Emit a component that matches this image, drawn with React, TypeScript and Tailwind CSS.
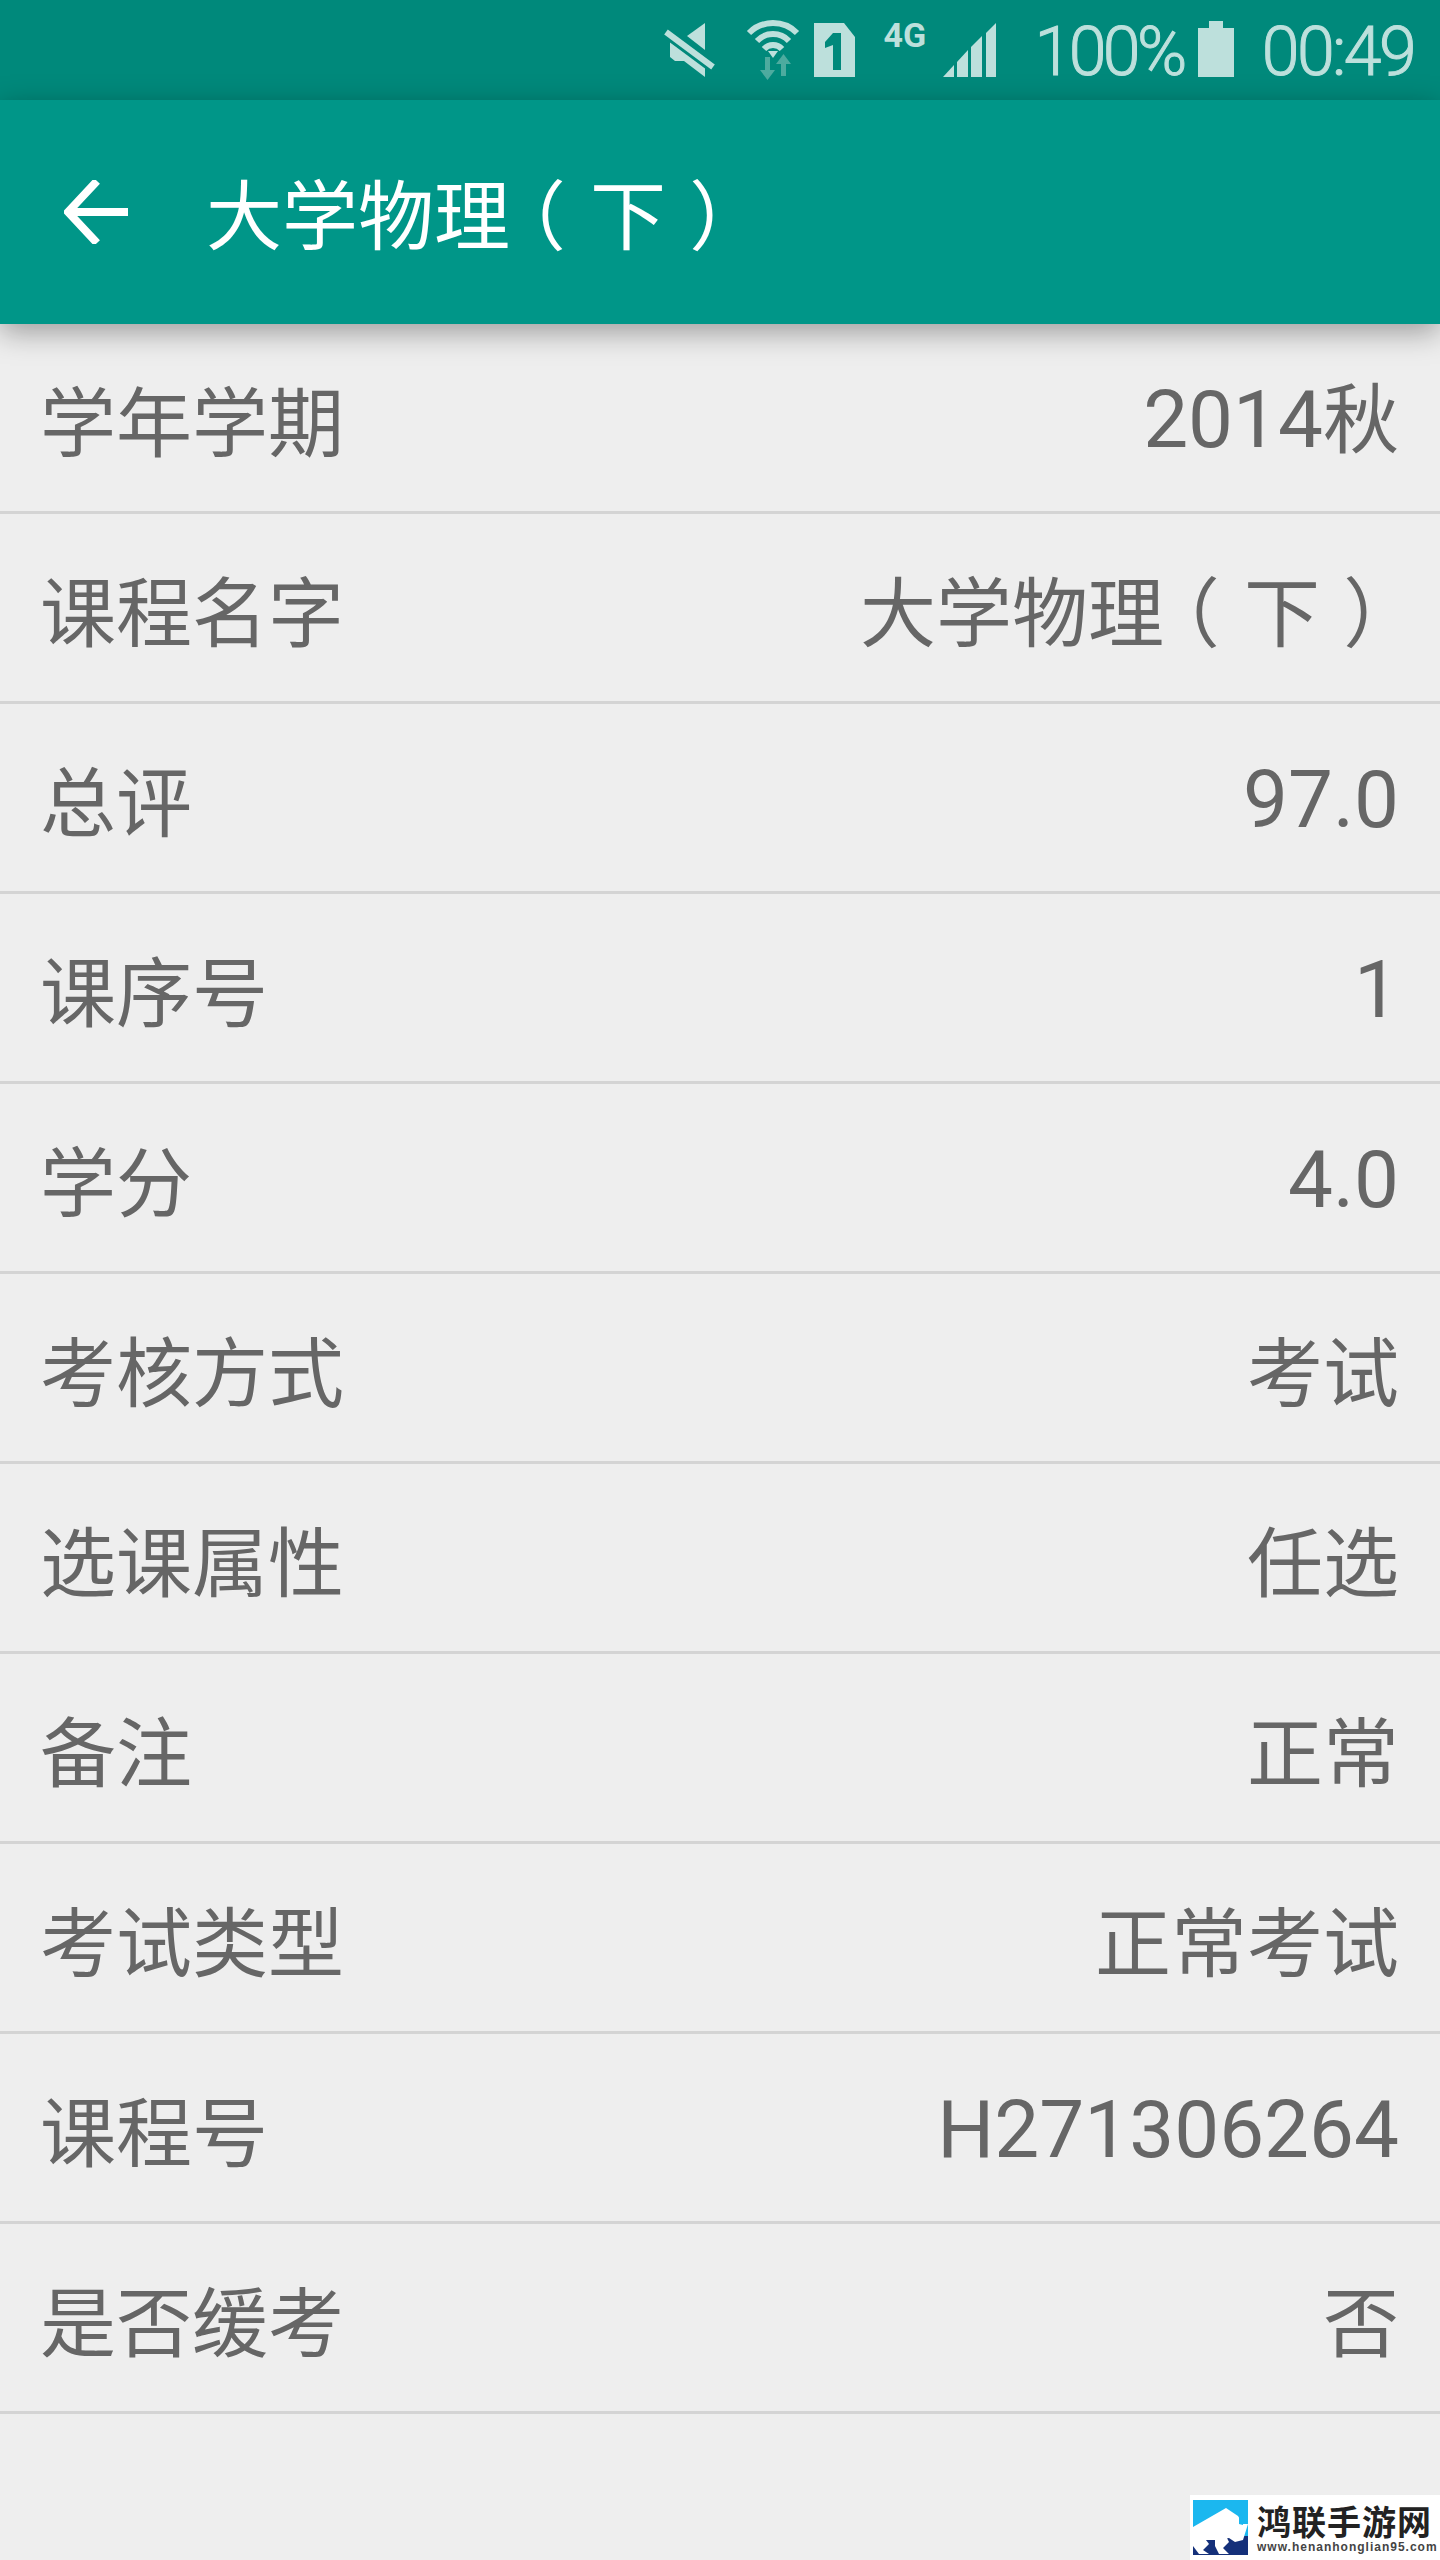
import type { ReactNode } from "react";

const rows: [string, ReactNode][] = [
  ["学年学期", <><L>2014</L>秋</>],
  ["课程名字", <Course />],
  ["总评", <L>97.0</L>],
  ["课序号", <L>1</L>],
  ["学分", <L>4.0</L>],
  ["考核方式", "考试"],
  ["选课属性", "任选"],
  ["备注", "正常"],
  ["考试类型", "正常考试"],
  ["课程号", <L>H271306264</L>],
  ["是否缓考", "否"],
];

function L({ children }: { children: ReactNode }) {
  return <span className="text-[80px] font-['Roboto',sans-serif]">{children}</span>;
}

function Course() {
  return (
    <span className="[font-feature-settings:'palt']">
      <span className="[font-feature-settings:normal]">大学物理</span>
      <span className="ml-[15px]">（</span>
      <span className="ml-[27px] [font-feature-settings:normal]">下</span>
      <span className="ml-[26px] mr-[15px]">）</span>
    </span>
  );
}

const font = "font-['Noto_Sans_CJK_SC',sans-serif]";
const ic = "#bde0dc";

function StatusBar() {
  return (
    <div className="h-[100px] bg-[#00897b] flex items-start justify-end pr-[26px] text-[#bde0dc]">
      <svg width="52" height="54" viewBox="0 0 52 54" className="mt-[23px] shrink-0">
        <polygon points="42,0 24,13 42,27" fill={ic} />
        <polygon points="7,19 42,44 42,54 21,38 12,38 7,34" fill={ic} />
        <line x1="3" y1="9" x2="50" y2="44" stroke="#00897b" strokeWidth="12" />
        <line x1="3" y1="9" x2="50" y2="44" stroke={ic} strokeWidth="6" />
      </svg>
      <svg width="60" height="62" viewBox="0 0 60 62" className="ml-[29px] mt-[18px] shrink-0">
        <g fill="none" stroke={ic} strokeWidth="6">
          <path d="M5 15 A34 34 0 0 1 53 15" />
          <path d="M13 23 A22 22 0 0 1 45 23" />
          <path d="M20 31 A12 12 0 0 1 38 31" />
        </g>
        <polygon points="29,40 24,33 34,33" fill={ic} />
        <polygon points="21,39 26,39 26,52 31,52 23.5,62 16,52 21,52" fill="#4dab9f" />
        <polygon points="37,58 42,58 42,46 47,46 39.5,36 32,46 37,46" fill="#4dab9f" />
      </svg>
      <svg width="41" height="54" viewBox="0 0 41 54" className="ml-[10px] mt-[23px] shrink-0">
        <polygon points="0,0 30,0 41,14 41,54 0,54" fill={ic} />
        <polygon points="19,10 27,10 27,47 19,47 19,22 11,25 11,19" fill="#00897b" />
      </svg>
      <span className="ml-[28px] mt-[17px] text-[34px] leading-[36px] font-bold font-['Roboto',sans-serif] text-[#bde0dc] w-[42px] shrink-0">4G</span>
      <svg width="53" height="54" viewBox="0 0 53 54" className="ml-[18px] mt-[23px] shrink-0">
        <polygon points="0,54 11,42 11,54" fill={ic} />
        <polygon points="14,39 25,27 25,54 14,54" fill={ic} />
        <polygon points="28,24 39,13 39,54 28,54" fill={ic} />
        <polygon points="43,10 53,0 53,54 43,54" fill={ic} />
      </svg>
      <span className="ml-[38px] mt-[13px] text-[68px] leading-[78px] font-light tracking-[-3.5px] [-webkit-text-stroke:1px_#bde0dc] font-['Roboto',sans-serif] shrink-0">100%</span>
      <svg width="36" height="56" viewBox="0 0 36 56" className="ml-[14px] mt-[21px] shrink-0">
        <rect x="11" y="0" width="14" height="8" fill={ic} />
        <rect x="0" y="7" width="36" height="49" fill={ic} />
      </svg>
      <span className="ml-[28px] mt-[13px] text-[68px] leading-[78px] font-light tracking-[-2.6px] [-webkit-text-stroke:1px_#bde0dc] font-['Roboto',sans-serif] shrink-0">00:49</span>
    </div>
  );
}

function Header() {
  return (
    <div className="relative z-10 h-[224px] bg-[#009688] flex items-center pl-[64px] shadow-[0_8px_28px_rgba(0,0,0,0.35)]">
      <svg width="64" height="64" viewBox="0 0 64 64" className="shrink-0">
        <g fill="none" stroke="#ffffff" strokeWidth="8">
          <path d="M4 32 H64" />
          <path d="M33 1 L4 32 L33 63" />
        </g>
      </svg>
      <span className="ml-[78px] mb-[2px] text-[76px] leading-none text-white whitespace-nowrap">
        <Course />
      </span>
    </div>
  );
}

export default function App() {
  return (
    <div className={`relative h-[2560px] w-[1440px] overflow-hidden bg-[#eeeeee] ${font}`}>
      <StatusBar />
      <Header />
      <div className="flex flex-col">
        {rows.map(([k, v]) => (
          <div key={k} className="h-[190px] border-b-[3px] border-[#d4d4d4] flex items-center justify-between pl-[40px] pr-[41px] text-[76px] text-[#666666] leading-none font-normal whitespace-nowrap">
            <span>{k}</span>
            <span>{v}</span>
          </div>
        ))}
      </div>
      <div className="absolute right-0 bottom-0 w-[250px] h-[65px] bg-white flex items-center pl-[3px]">
        <svg width="55" height="55" viewBox="0 0 55 55" className="shrink-0">
          <rect width="55" height="55" fill="#1bb7ef" />
          <rect y="36" width="55" height="19" fill="#15307a" />
          <polygon points="0,27 33,8 45,16 50,24 55,24 50,40 42,42 36,38 24,40 0,40" fill="#ffffff" />
          <polygon points="46,12 50,18 50,25 46,24" fill="#1bb7ef" />
          <polygon points="0,36 10,36 16,44 10,50 16,54 6,54 0,46" fill="#ffffff" />
          <polygon points="22,38 34,38 36,42 30,48 36,54 26,54 22,46" fill="#ffffff" />
        </svg>
        <div className="ml-[9px] flex flex-col">
          <span className="text-[34px] leading-[38px] tracking-[1px] font-bold text-[#222222] whitespace-nowrap">鸿联手游网</span>
          <span className="text-[12px] leading-[14px] tracking-[1px] font-bold text-[#444444] whitespace-nowrap font-['Liberation_Sans',sans-serif]">www.henanhonglian95.com</span>
        </div>
      </div>
    </div>
  );
}
